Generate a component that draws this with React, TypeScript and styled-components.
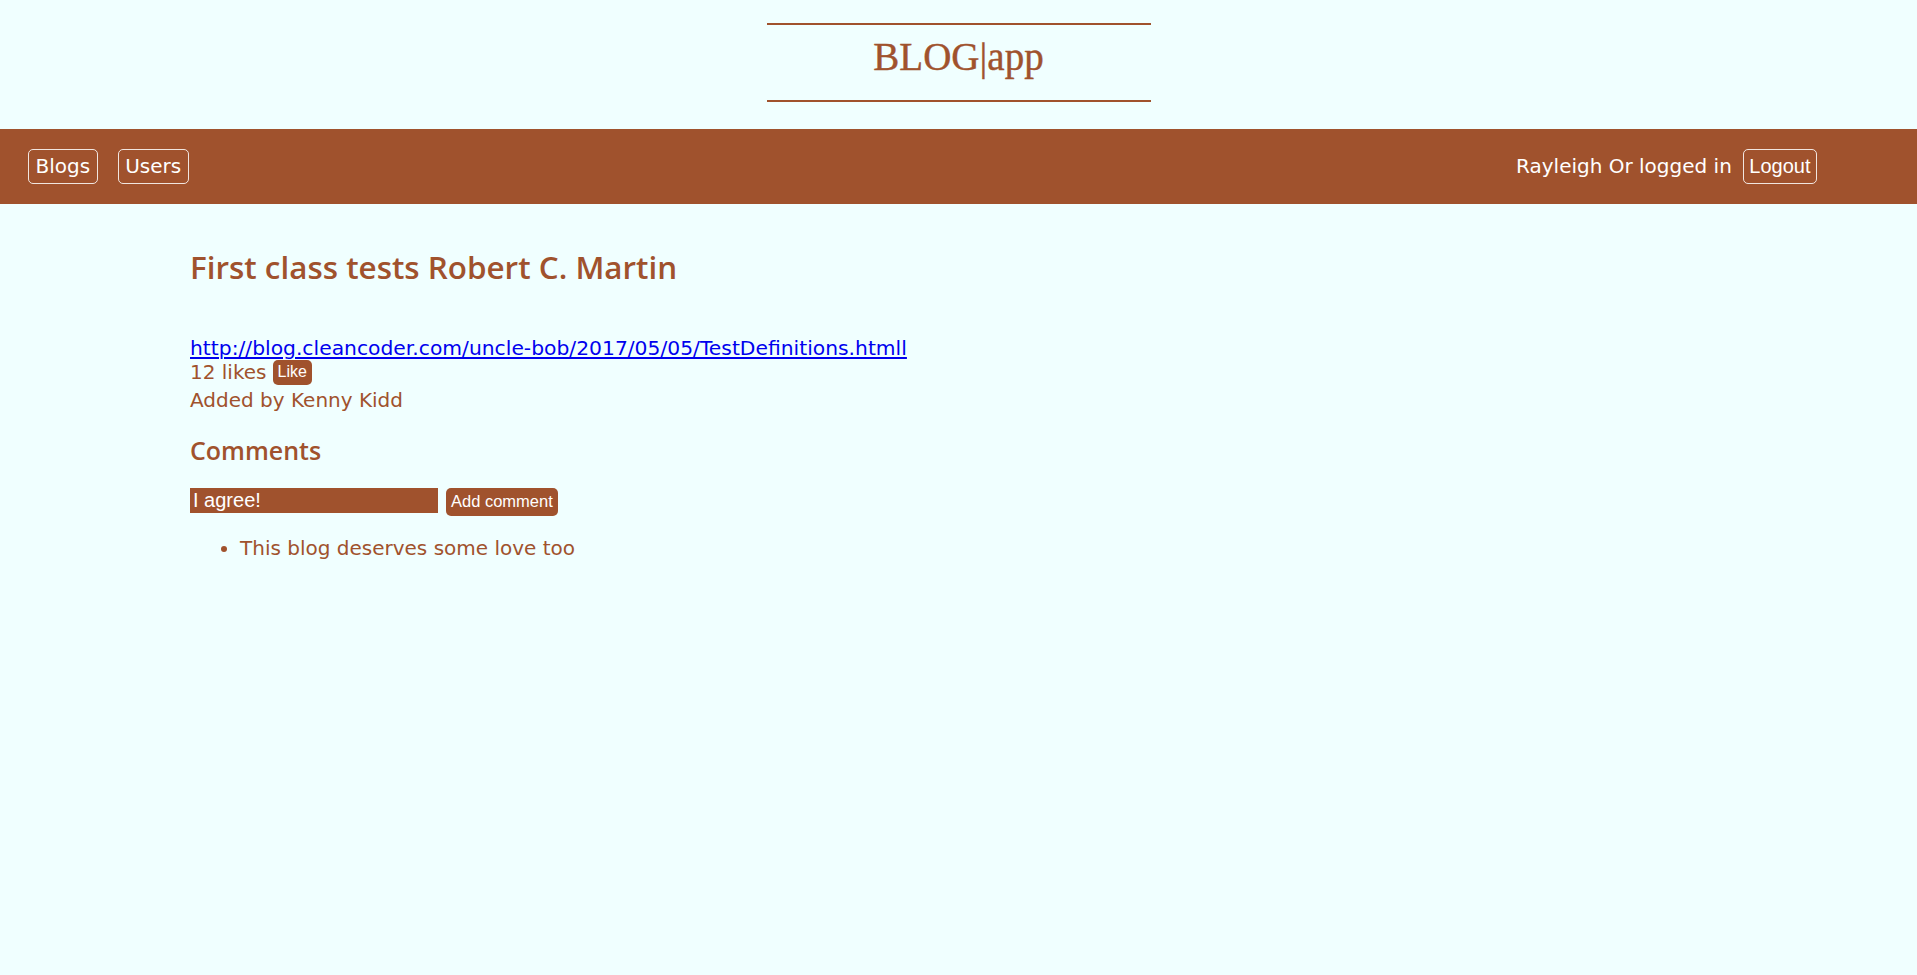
import React from "react";
import styled, { createGlobalStyle } from "styled-components";

const SIENNA = "#A0522D";

const Global = createGlobalStyle`
  html, body {
    margin: 0;
    padding: 0;
    background: #F0FFFF;
  }
  body {
    font-family: "DejaVu Sans", sans-serif;
    font-size: 20px;
    color: ${SIENNA};
  }
`;

const Page = styled.div`
  min-height: 975px;
  background: #F0FFFF;
  display: flex;
  flex-direction: column;
`;

const Masthead = styled.header`
  display: flex;
  justify-content: center;
  padding-top: 23px;
`;

const Logo = styled.h1`
  margin: 0;
  width: 384px;
  box-sizing: border-box;
  border-top: 2px solid ${SIENNA};
  border-bottom: 2px solid ${SIENNA};
  padding: 9px 0 20.5px;
  text-align: center;
  font-family: "Liberation Serif", "Times New Roman", serif;
  font-weight: normal;
  font-size: 39px;
  line-height: normal;
  color: ${SIENNA};
  -webkit-text-stroke: 0.4px ${SIENNA};
`;

const NavBar = styled.nav`
  margin-top: 27px;
  height: 75px;
  background: ${SIENNA};
  display: flex;
  align-items: center;
  justify-content: space-between;
  padding: 0 100px 0 28px;
  box-sizing: border-box;
`;

const NavGroup = styled.div<{ $gap: number }>`
  display: flex;
  align-items: center;
  gap: ${(p) => p.$gap}px;
`;

const NavLink = styled.a`
  display: block;
  box-sizing: border-box;
  height: 35px;
  line-height: 33px;
  padding: 0 6.5px;
  border: 1px solid rgba(255, 255, 255, 0.85);
  border-radius: 5px;
  color: #ffffff;
  text-decoration: none;
  font-family: "DejaVu Sans", sans-serif;
  font-size: 20px;
`;

const UserText = styled.span`
  color: #ffffff;
  font-size: 20px;
  line-height: 24px;
`;

const OutlineButton = styled.button`
  box-sizing: border-box;
  height: 35px;
  padding: 0 5.5px;
  border: 1px solid rgba(255, 255, 255, 0.85);
  border-radius: 5px;
  background: transparent;
  color: #ffffff;
  font-family: "Liberation Sans", Arial, sans-serif;
  font-size: 20px;
  cursor: pointer;
`;

const Main = styled.main`
  padding: 43px 190px 0;
  display: flex;
  flex-direction: column;
  align-items: flex-start;
`;

const Title = styled.h2`
  margin: 0;
  font-family: "Open Sans", sans-serif;
  font-weight: 600;
  font-size: 31.4px;
  line-height: 40px;
  color: ${SIENNA};
`;

const BlogLink = styled.a`
  margin-top: 49px;
  line-height: 24px;
  color: #0000ee;
  font-size: 20.3px;
`;

const LikeRow = styled.div`
  display: flex;
  align-items: center;
  height: 25px;
  line-height: 24px;
`;

const FilledButton = styled.button<{ $h: number; $fs: number }>`
  box-sizing: border-box;
  height: ${(p) => p.$h}px;
  padding: 0 5px;
  border: none;
  border-radius: 5px;
  background: ${SIENNA};
  color: #ffffff;
  font-family: "Liberation Sans", Arial, sans-serif;
  font-size: ${(p) => p.$fs}px;
  cursor: pointer;
`;

const LikeButton = styled(FilledButton)`
  margin-left: 6px;
`;

const Line = styled.div`
  margin-top: 3px;
  line-height: 24px;
`;

const SubTitle = styled.h3`
  margin: 23px 0 0;
  font-family: "Open Sans", sans-serif;
  font-weight: 600;
  font-size: 25px;
  line-height: 30px;
  color: ${SIENNA};
`;

const CommentForm = styled.form`
  margin-top: 23px;
  display: flex;
  align-items: flex-start;
  gap: 8px;
`;

const CommentInput = styled.input`
  box-sizing: border-box;
  width: 248px;
  height: 25px;
  padding: 0 3px;
  border: none;
  outline: none;
  background: ${SIENNA};
  color: #ffffff;
  caret-color: #ffd400;
  font-family: "Liberation Sans", Arial, sans-serif;
  font-size: 20px;
`;

const CommentList = styled.ul`
  margin: 20px 0 0;
  padding-left: 50px;
  line-height: 24px;
`;

const CommentItem = styled.li`
  color: ${SIENNA};
`;

export default function App() {
  return (
    <Page>
      <Global />
      <Masthead>
        <Logo>BLOG|app</Logo>
      </Masthead>
      <NavBar>
        <NavGroup $gap={20}>
          <NavLink href="#">Blogs</NavLink>
          <NavLink href="#">Users</NavLink>
        </NavGroup>
        <NavGroup $gap={11}>
          <UserText>Rayleigh Or logged in</UserText>
          <OutlineButton>Logout</OutlineButton>
        </NavGroup>
      </NavBar>
      <Main>
        <Title>First class tests Robert C. Martin</Title>
        <BlogLink href="#">
          http://blog.cleancoder.com/uncle-bob/2017/05/05/TestDefinitions.htmll
        </BlogLink>
        <LikeRow>
          <span>12 likes</span>
          <LikeButton $h={25} $fs={16}>Like</LikeButton>
        </LikeRow>
        <Line>Added by Kenny Kidd</Line>
        <SubTitle>Comments</SubTitle>
        <CommentForm onSubmit={(e) => e.preventDefault()}>
          <CommentInput defaultValue="I agree!" />
          <FilledButton type="submit" $h={28} $fs={16.5}>
            Add comment
          </FilledButton>
        </CommentForm>
        <CommentList>
          <CommentItem>This blog deserves some love too</CommentItem>
        </CommentList>
      </Main>
    </Page>
  );
}
